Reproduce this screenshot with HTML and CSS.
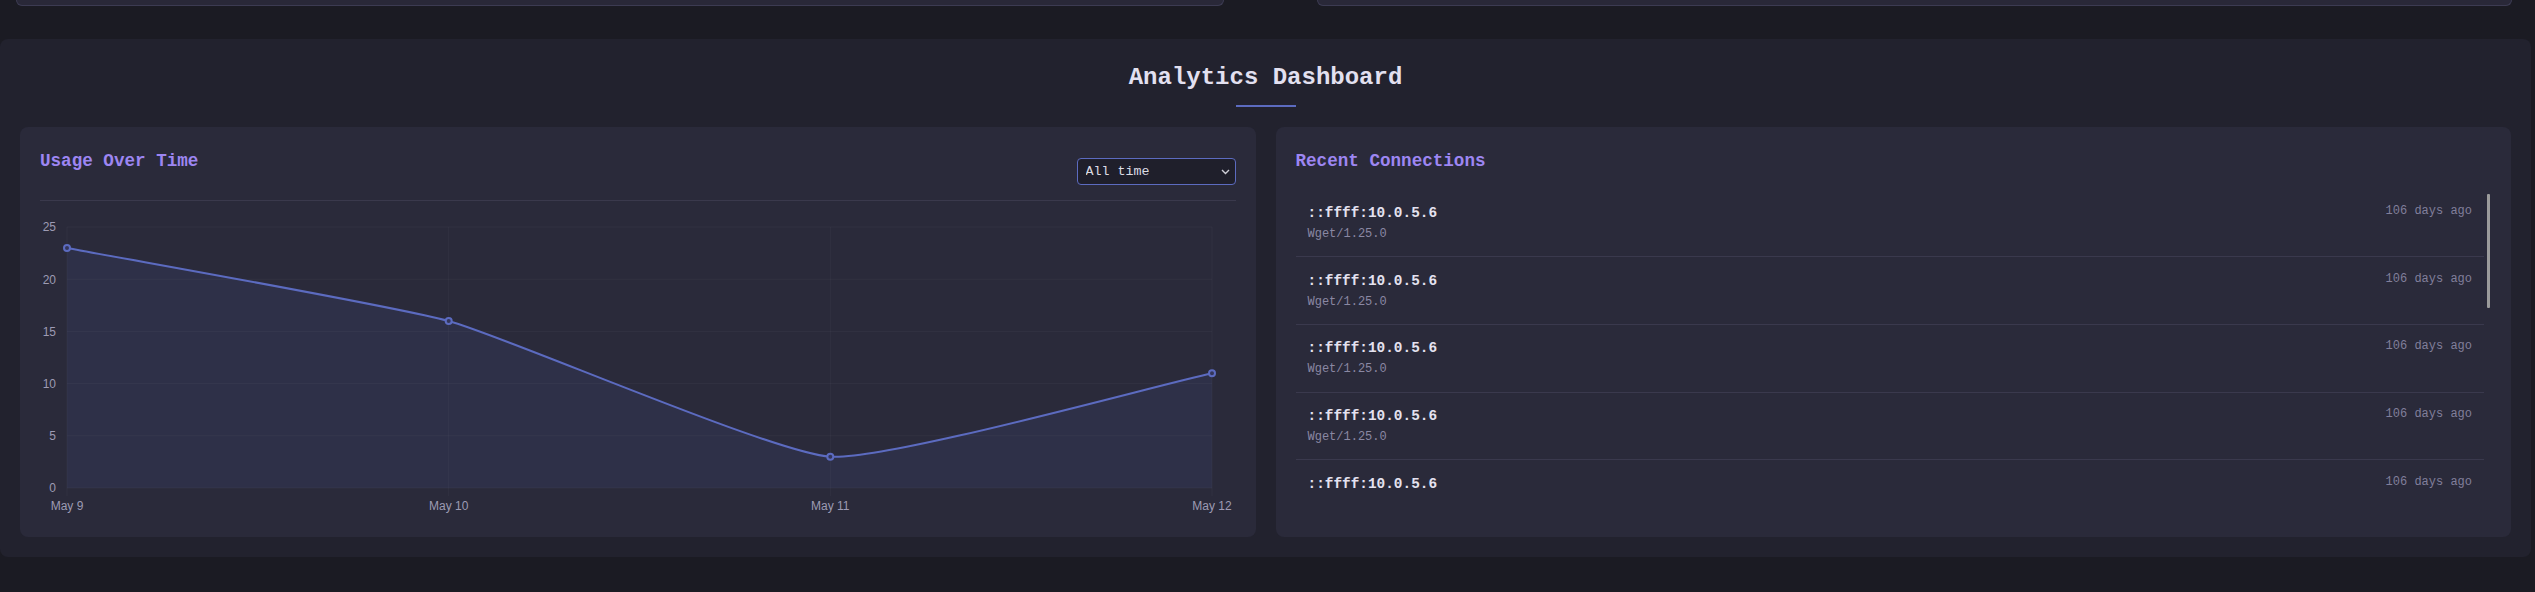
FILE: index.html
```html
<!DOCTYPE html>
<html lang="en">
<head>
<meta charset="utf-8">
<title>Analytics Dashboard</title>
<link rel="stylesheet" href="styles.css">
</head>
<body>
  <div class="top-row">
    <div class="stub"></div>
    <div class="stub"></div>
  </div>

  <section class="analytics">
    <h2 class="dash-title">Analytics Dashboard</h2>
    <div class="panels">
      <div class="card">
        <div class="card-head">
          <h3 class="card-title">Usage Over Time</h3>
          <div class="select-wrap">
            <select class="range">
              <option>All time</option>
              <option>Last 7 days</option>
              <option>Last 30 days</option>
            </select>
            <svg class="chev" width="9" height="6" viewBox="0 0 9 6"><polyline points="1,1 4.5,4.5 8,1" fill="none" stroke="#cfcfd8" stroke-width="1.4"/></svg>
          </div>
        </div>
        <svg class="chart" width="1196" height="316" viewBox="40 200 1196 316">
          <g class="grid-lines">
            <line x1="67" y1="226" x2="1212" y2="226"/>
            <line x1="67" y1="278.2" x2="1212" y2="278.2"/>
            <line x1="67" y1="330.4" x2="1212" y2="330.4"/>
            <line x1="67" y1="382.6" x2="1212" y2="382.6"/>
            <line x1="67" y1="434.8" x2="1212" y2="434.8"/>
            <line x1="67" y1="487" x2="1212" y2="487"/>
            <line x1="67" y1="226" x2="67" y2="495"/>
            <line x1="448.7" y1="226" x2="448.7" y2="495"/>
            <line x1="830.3" y1="226" x2="830.3" y2="495"/>
            <line x1="1212" y1="226" x2="1212" y2="495"/>
          </g>
          <path class="area" d="M67,246.9 C124.3,257.9 392.6,304.7 448.7,320 C507.1,336 772,451.7 830.3,455.7 C886.5,459.5 1154.7,384.7 1212,372.2 L1212,487 L67,487 Z"/>
          <path class="line" d="M67,246.9 C124.3,257.9 392.6,304.7 448.7,320 C507.1,336 772,451.7 830.3,455.7 C886.5,459.5 1154.7,384.7 1212,372.2"/>
          <g class="pts">
            <circle cx="67" cy="246.9" r="3"/>
            <circle cx="448.7" cy="320" r="3"/>
            <circle cx="830.3" cy="455.7" r="3"/>
            <circle cx="1212" cy="372.2" r="3"/>
          </g>
          <g class="ylab">
            <text x="56" y="230.3">25</text>
            <text x="56" y="282.5">20</text>
            <text x="56" y="334.7">15</text>
            <text x="56" y="386.9">10</text>
            <text x="56" y="439.1">5</text>
            <text x="56" y="491.3">0</text>
          </g>
          <g class="xlab">
            <text x="67" y="509">May 9</text>
            <text x="448.7" y="509">May 10</text>
            <text x="830.3" y="509">May 11</text>
            <text x="1212" y="509">May 12</text>
          </g>
        </svg>
      </div>

      <div class="card">
        <h3 class="card-title conn-title">Recent Connections</h3>
        <div class="conn-wrap">
          <div class="conn-list">
            <div class="conn"><div><div class="ip">::ffff:10.0.5.6</div><div class="ua">Wget/1.25.0</div></div><div class="ago">106 days ago</div></div>
            <div class="conn"><div><div class="ip">::ffff:10.0.5.6</div><div class="ua">Wget/1.25.0</div></div><div class="ago">106 days ago</div></div>
            <div class="conn"><div><div class="ip">::ffff:10.0.5.6</div><div class="ua">Wget/1.25.0</div></div><div class="ago">106 days ago</div></div>
            <div class="conn"><div><div class="ip">::ffff:10.0.5.6</div><div class="ua">Wget/1.25.0</div></div><div class="ago">106 days ago</div></div>
            <div class="conn"><div><div class="ip">::ffff:10.0.5.6</div></div><div class="ago">106 days ago</div></div>
          </div>
          <div class="scroll-track"><div class="scroll-thumb"></div></div>
        </div>
      </div>
    </div>
  </section>
</body>
</html>
```

FILE: styles.css
```css
* { box-sizing: border-box; }

html, body {
  margin: 0;
  padding: 0;
  background: #1b1b23;
  font-family: "Liberation Mono", "DejaVu Sans Mono", monospace;
  color: #e2e0f0;
  overflow: hidden;
}

.top-row {
  display: grid;
  grid-template-columns: 1208px 1195px;
  column-gap: 93px;
  padding-left: 16px;
}

.stub {
  height: 6px;
  background: #292838;
  border: 1px solid #3c3b52;
  border-top: 0;
  border-radius: 0 0 7px 7px;
}

.analytics {
  margin-top: 33px;
  width: 2531px;
  background: #22222e;
  border-radius: 8px;
  padding: 20px;
}

.dash-title {
  position: relative;
  margin: 0 0 20px;
  padding-bottom: 10px;
  text-align: center;
  font-size: 24px;
  line-height: 1.6;
  font-weight: bold;
  color: #e2e0f0;
}

.dash-title::after {
  content: "";
  position: absolute;
  left: 50%;
  bottom: 0;
  width: 60px;
  height: 2px;
  margin-left: -30px;
  background: #5c6bc0;
}

.panels {
  display: grid;
  grid-template-columns: 1fr 1fr;
  gap: 20px;
}

.card {
  background: #2a2a3a;
  border-radius: 8px;
  padding: 20px;
  min-width: 0;
}

.card-title {
  margin: 0;
  font-size: 17.6px;
  line-height: 1.6;
  font-weight: bold;
  color: #9d86f2;
}

.card-head {
  display: flex;
  justify-content: space-between;
  align-items: center;
  padding-bottom: 4px;
  border-bottom: 1px solid #3a394c;
}

.card-head .card-title {
  margin-bottom: 20px;
}

.select-wrap {
  position: relative;
  width: 159px;
  height: 27px;
}

.range {
  appearance: none;
  -webkit-appearance: none;
  width: 100%;
  height: 100%;
  padding: 0 8px;
  background: #1f1f2b;
  border: 1px solid #5c6bc0;
  border-radius: 4px;
  color: #dcdce4;
  font-family: "Liberation Mono", "DejaVu Sans Mono", monospace;
  font-size: 13.33px;
  outline: none;
}

.chev {
  position: absolute;
  right: 6px;
  top: 11px;
  pointer-events: none;
}

.chart {
  display: block;
}

.grid-lines line {
  stroke: rgba(255, 255, 255, 0.035);
  stroke-width: 1;
}

.area {
  fill: rgba(92, 107, 192, 0.1);
  stroke: none;
}

.line {
  fill: none;
  stroke: #5c6bc0;
  stroke-width: 2;
}

.pts circle {
  fill: #34365a;
  stroke: #5c6bc0;
  stroke-width: 2;
}

.ylab text,
.xlab text {
  font-family: "Liberation Sans", Arial, sans-serif;
  font-size: 12px;
  fill: #9d9bb3;
}

.ylab text { text-anchor: end; }
.xlab text { text-anchor: middle; }

.conn-title {
  margin-bottom: 14px;
}

.conn-wrap {
  display: flex;
  height: 308px;
  overflow: hidden;
}

.conn-list {
  flex: 1;
  min-width: 0;
}

.scroll-track {
  flex: none;
  width: 7px;
  padding: 4px 1px 0 3px;
}

.scroll-thumb {
  height: 114px;
  background: #9b9b9b;
  border-radius: 1px;
}

.conn {
  display: flex;
  justify-content: space-between;
  align-items: flex-start;
  padding: 12.25px 12px;
  border-bottom: 1px solid #3a394d;
}

.conn:last-child {
  border-bottom: 0;
}

.ip {
  font-size: 14.4px;
  line-height: 1.6;
  font-weight: bold;
  color: #e4e2f0;
}

.ua {
  font-size: 12px;
  line-height: 1.6;
  color: #8a88a3;
}

.ago {
  font-size: 12px;
  line-height: 1.6;
  color: #817f9b;
}
```
